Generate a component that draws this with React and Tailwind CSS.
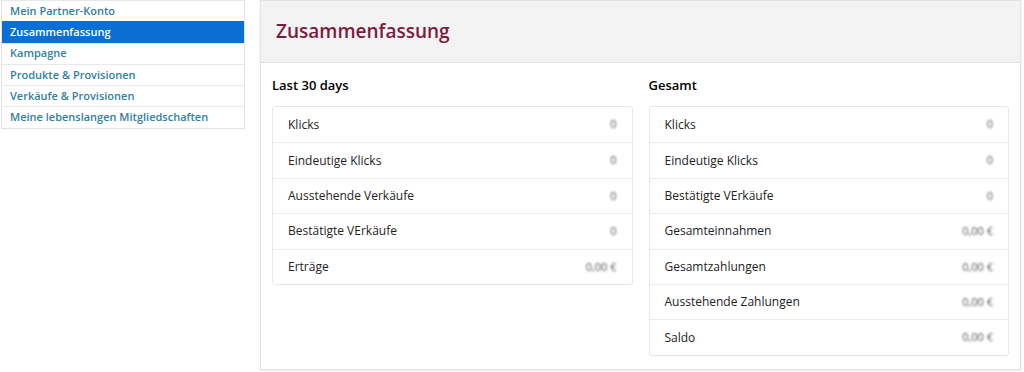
import React from "react";

const nav = [
  "Mein Partner-Konto",
  "Zusammenfassung",
  "Kampagne",
  "Produkte & Provisionen",
  "Verkäufe & Provisionen",
  "Meine lebenslangen Mitgliedschaften",
];

const left = [
  ["Klicks", "0"],
  ["Eindeutige Klicks", "0"],
  ["Ausstehende Verkäufe", "0"],
  ["Bestätigte VErkäufe", "0"],
  ["Erträge", "0,00 €"],
];
const right = [
  ["Klicks", "0"],
  ["Eindeutige Klicks", "0"],
  ["Bestätigte VErkäufe", "0"],
  ["Gesamteinnahmen", "0,00 €"],
  ["Gesamtzahlungen", "0,00 €"],
  ["Ausstehende Zahlungen", "0,00 €"],
  ["Saldo", "0,00 €"],
];

function Card({ title, rows }) {
  return (
    <div className="flex-1">
      <div className="h-[20px] mb-[11px] text-[13px] font-semibold text-black leading-[20px]">{title}</div>
      <div className="border border-[#e6e6e6] rounded-[3px] bg-white">
        {rows.map(([k, v], i) => (
          <div
            key={i}
            className={`flex items-center justify-between h-[35.4px] px-[15px] ${i ? "border-t border-[#ececec]" : ""}`}
          >
            <span className="text-[12px] text-[#222]">{k}</span>
            <span className="text-[11px] text-[#555] blur-[1.2px]">{v}</span>
          </div>
        ))}
      </div>
    </div>
  );
}

export default function App() {
  return (
    <div className="flex items-start gap-[15px] bg-white w-[1024px] h-[372px] pl-[1px]" style={{ fontFamily: "'Open Sans', 'Liberation Sans', sans-serif" }}>
      <div className="w-[244px] border-x border-b border-[#e3e3e3]">
        {nav.map((n, i) => (
          <div
            key={i}
            className={`h-[21.3px] flex items-center px-[8px] text-[11px] font-semibold border-t ${
              i === 1 ? "bg-[#0a6fd4] text-white border-[#0a6fd4]" : "text-[#33809c] border-[#e8e8e8]"
            }`}
          >
            {n}
          </div>
        ))}
      </div>
      <div className="w-[761px] h-[370px] border border-[#e4e4e4] shadow-[0_1px_3px_rgba(0,0,0,0.08)] bg-white">
        <div className="h-[62px] bg-[#f3f3f3] border-b border-[#e2e2e2] flex items-center px-[15px]">
          <h1 className="text-[19px] font-semibold text-[#7b1c3e]">Zusammenfassung</h1>
        </div>
        <div className="flex gap-[16px] pl-[11px] pr-[11px] pt-[12px]">
          <Card title="Last 30 days" rows={left} />
          <Card title="Gesamt" rows={right} />
        </div>
      </div>
    </div>
  );
}
